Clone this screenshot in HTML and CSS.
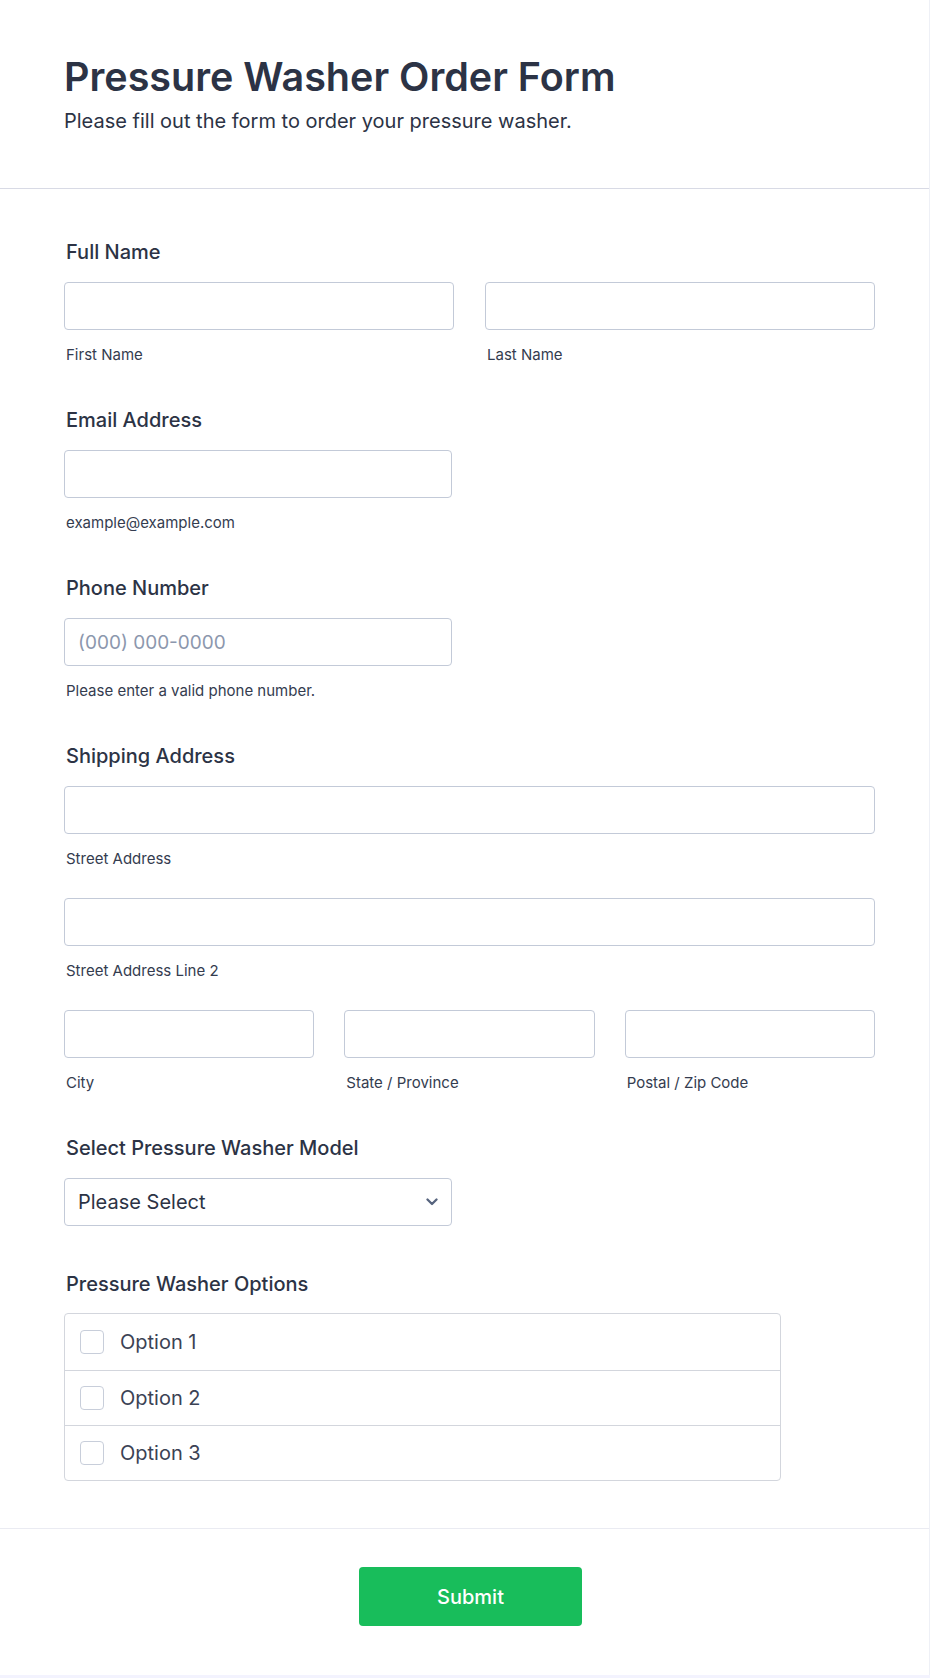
FILE: index.html
```html
<!DOCTYPE html>
<html lang="en">
<head>
<meta charset="utf-8">
<title>Pressure Washer Order Form</title>
<link rel="stylesheet" href="styles.css">
</head>
<body>
<div class="card">
  <header class="header">
    <h1 class="title">Pressure Washer Order Form</h1>
    <p class="subtitle">Please fill out the form to order your pressure washer.</p>
  </header>

  <main class="body">
    <section class="field">
      <div class="label">Full Name</div>
      <div class="row two">
        <div class="col"><div class="input"></div><div class="sub">First Name</div></div>
        <div class="col"><div class="input"></div><div class="sub">Last Name</div></div>
      </div>
    </section>

    <section class="field">
      <div class="label">Email Address</div>
      <div class="half"><div class="input"></div><div class="sub">example@example.com</div></div>
    </section>

    <section class="field">
      <div class="label">Phone Number</div>
      <div class="half"><div class="input"><span class="placeholder">(000) 000-0000</span></div><div class="sub">Please enter a valid phone number.</div></div>
    </section>

    <section class="field">
      <div class="label">Shipping Address</div>
      <div class="col"><div class="input"></div><div class="sub">Street Address</div></div>
      <div class="col spaced"><div class="input"></div><div class="sub">Street Address Line 2</div></div>
      <div class="row three spaced">
        <div class="col"><div class="input"></div><div class="sub">City</div></div>
        <div class="col"><div class="input"></div><div class="sub">State / Province</div></div>
        <div class="col"><div class="input"></div><div class="sub">Postal / Zip Code</div></div>
      </div>
    </section>

    <section class="field no-sub">
      <div class="label">Select Pressure Washer Model</div>
      <div class="half">
        <div class="input select">
          <span class="value">Please Select</span>
          <svg class="chev" width="12" height="8" viewBox="0 0 12 8"><path d="M1.5 1.5 L6 6 L10.5 1.5" fill="none" stroke="#57647e" stroke-width="2.3" stroke-linecap="round" stroke-linejoin="round"/></svg>
        </div>
      </div>
    </section>

    <section class="field last">
      <div class="label options-label">Pressure Washer Options</div>
      <div class="options">
        <div class="option"><span class="box"></span><span class="opt-text">Option 1</span></div>
        <div class="option"><span class="box"></span><span class="opt-text">Option 2</span></div>
        <div class="option"><span class="box"></span><span class="opt-text">Option 3</span></div>
      </div>
    </section>
  </main>

  <footer class="footer">
    <button class="submit" type="button">Submit</button>
  </footer>
</div>
</body>
</html>
```

FILE: styles.css
```css
* { box-sizing: border-box; }

html, body {
  margin: 0;
  padding: 0;
  background: #f3f3fe;
}

body {
  font-family: Inter, "Noto Sans", "Liberation Sans", sans-serif;
  color: #2c3345;
}

.card {
  width: 930px;
  background: #ffffff;
  border-right: 1px solid #eef0f6;
}

.header {
  padding: 53px 54px 54px 64px;
  border-bottom: 1px solid #d8dae5;
}

.title {
  margin: 0;
  font-size: 39.5px;
  line-height: 48px;
  font-weight: 600;
  color: #2c3345;
}

.subtitle {
  margin: 7px 0 0 0;
  font-size: 20px;
  line-height: 26px;
  font-weight: 400;
  color: #2c3345;
}

.body {
  padding: 51px 54px 47px 64px;
  border-bottom: 1px solid #eaebf2;
}

.field {
  margin-bottom: 43px;
}

.field.no-sub { margin-bottom: 46px; }
.field.last { margin-bottom: 0; }

.label {
  font-size: 20px;
  line-height: 24px;
  font-weight: 500;
  color: #2c3345;
  padding-left: 2px;
  margin-bottom: 18px;
}

.options-label { margin-bottom: 17px; }

.row {
  display: grid;
  column-gap: 31px;
}
.row.two { grid-template-columns: 1fr 1fr; }
.row.three { grid-template-columns: 1fr 1fr 1fr; column-gap: 30px; }

.spaced { margin-top: 29px; }

.col { display: flex; flex-direction: column; }

.half { width: 388px; }

.input {
  height: 48px;
  border: 1px solid #c3cad8;
  border-radius: 4px;
  background: #fff;
  display: flex;
  align-items: center;
  padding: 0 13px;
}

.placeholder {
  font-size: 19px;
  color: #8c97ad;
}

.select {
  justify-content: space-between;
  padding: 0 13px 0 13px;
}

.select .value {
  font-size: 20px;
  color: #2c3345;
}

.chev { display: block; }

.sub {
  margin-top: 15px;
  font-size: 15px;
  line-height: 20px;
  color: #343c4f;
  padding-left: 2px;
}

.options {
  width: 717px;
  border: 1px solid #d3d6dd;
  border-radius: 4px;
}

.option {
  height: 55px;
  display: flex;
  align-items: center;
  padding-left: 15px;
  border-top: 1px solid #d3d6dd;
}
.option:first-child { border-top: none; height: 56px; }

.box {
  width: 24px;
  height: 24px;
  border: 1px solid #c8ceda;
  border-radius: 4px;
  background: #fff;
  flex: none;
}

.opt-text {
  margin-left: 16px;
  font-size: 20px;
  color: #3b4254;
}

.footer {
  display: flex;
  justify-content: center;
  padding: 38px 55px 49px 67px;
}

.submit {
  width: 223px;
  height: 59px;
  border: none;
  border-radius: 4px;
  background: #18bd5b;
  color: #ffffff;
  font-family: Inter, "Noto Sans", "Liberation Sans", sans-serif;
  font-size: 20px;
  font-weight: 500;
  cursor: pointer;
}
```
